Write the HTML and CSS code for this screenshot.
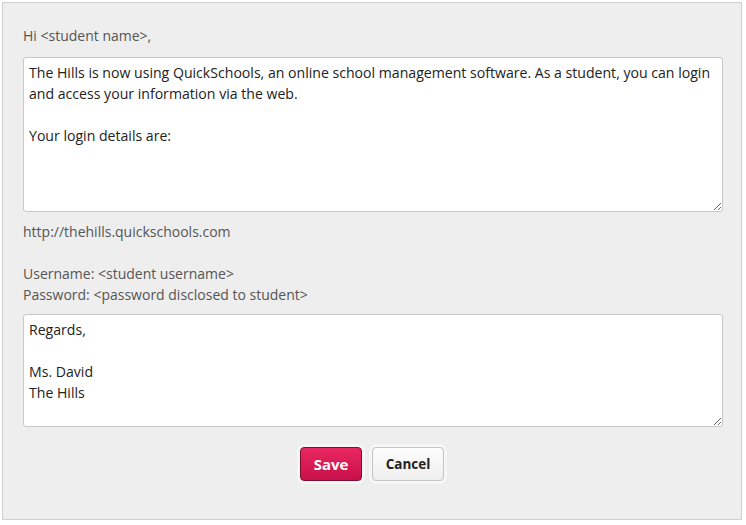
FILE: index.html
```html
<!DOCTYPE html>
<html>
<head>
<meta charset="utf-8">
<link rel="stylesheet" href="styles.css">
</head>
<body>
<div class="panel">
  <div class="greet">Hi &lt;student name&gt;,</div>
  <textarea class="box box-intro">The Hills is now using QuickSchools, an online school management software. As a student, you can login and access your information via the web.

Your login details are:</textarea>
  <div class="details">
    <div>http://thehills.quickschools.com</div>
    <div>&nbsp;</div>
    <div>Username: &lt;student username&gt;</div>
    <div>Password: &lt;password disclosed to student&gt;</div>
  </div>
  <textarea class="box box-sign">Regards,

Ms. David
The Hills</textarea>
  <div class="actions">
    <span class="ring"><button class="btn btn-save">Save</button></span>
    <span class="ring"><button class="btn btn-cancel">Cancel</button></span>
  </div>
</div>
</body>
</html>
```
FILE: styles.css
```css
html, body { margin: 0; padding: 0; background: #fff; }
body { padding: 2px 0 0 2px; }
.panel {
  width: 740px;
  height: 518px;
  box-sizing: border-box;
  border: 1px solid #cfcfcf;
  background: #eeeeee;
  padding: 23px 20px 0 20px;
  font-family: "Open Sans", "Liberation Sans", sans-serif;
  font-size: 14px;
  line-height: 20.5px;
  color: #555;
}
.greet { margin-bottom: 10px; }
.box {
  display: block;
  width: 700px;
  box-sizing: border-box;
  border: 1px solid #c8c8c8;
  border-radius: 3px;
  background: #fff;
  padding: 4px 5px;
  margin: 0;
  font-family: inherit;
  font-size: 14.1px;
  line-height: 21px;
  color: #222;
  resize: vertical;
  outline: none;
}
.box-intro { height: 155px; }
.box-sign { height: 113px; }
.details { padding: 10px 0 8px 0; }
.details div { height: 21px; }
.actions {
  display: flex;
  justify-content: center;
  gap: 4px;
  margin-top: 17px;
}
.ring {
  display: inline-block;
  padding: 3px;
  border-radius: 7px;
  background: #f6f6f6;
}
.btn {
  display: block;
  height: 34px;
  padding: 0;
  border-radius: 4px;
  font-family: inherit;
  font-weight: bold;
  font-size: 13.5px;
  cursor: pointer;
}
.btn-save {
  width: 62px;
  border: 1px solid #7e1030;
  background: linear-gradient(#ea2760, #c8104a);
  color: #fff;
  font-size: 15px;
}
.btn-cancel {
  width: 72px;
  border: 1px solid #c4c4c4;
  background: linear-gradient(#fdfdfd, #eeeeee);
  color: #222;
}
```
